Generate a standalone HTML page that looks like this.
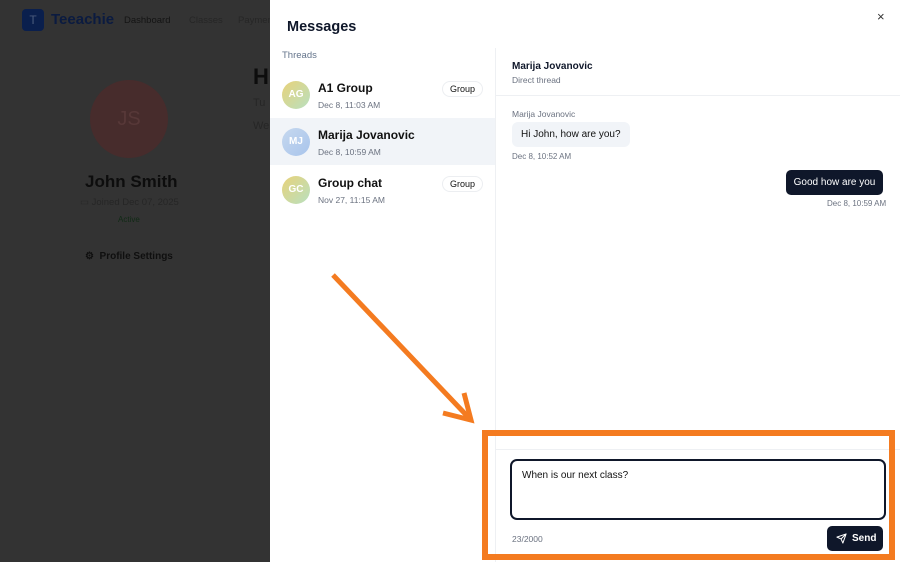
<!DOCTYPE html>
<html><head><meta charset="utf-8"><style>
*{box-sizing:border-box;margin:0;padding:0}
body{width:900px;height:562px;overflow:hidden;position:relative;font-family:"Liberation Sans",sans-serif;background:#333333;color:#0f172a}
.a{position:absolute}
.av{position:absolute;width:28px;height:28px;border-radius:50%;color:#fff;font-size:10px;font-weight:bold;text-align:center;line-height:28px}
.badge{position:absolute;right:12px;font-size:9px;border:1px solid #eceef1;border-radius:10px;padding:2px 7px;color:#111}
.nm{position:absolute;left:48px;font-size:12px;font-weight:bold;color:#111}
.dt{position:absolute;left:48px;font-size:8.5px;color:#6b7280}
</style></head><body>
<div class="a" style="left:22px;top:9px;width:22px;height:22px;border-radius:4px;background:#0a1f4d;color:#4a5a7c;font-size:12px;text-align:center;line-height:22px">T</div>
<div class="a" style="left:51px;top:11px;font-size:15px;font-weight:bold;color:#0b1b40">Teeachie</div>
<div class="a" style="left:124px;top:15px;font-size:9.5px;color:#141414">Dashboard</div>
<div class="a" style="left:189px;top:15px;font-size:9.5px;color:#262626">Classes</div>
<div class="a" style="left:238px;top:15px;font-size:9.5px;color:#262626">Payments</div>
<div class="a" style="left:90px;top:80px;width:78px;height:78px;border-radius:50%;background:#472c2c;color:#573838;font-size:20px;text-align:center;line-height:78px">JS</div>
<div class="a" style="left:85px;top:172px;font-size:17px;font-weight:bold;color:#0d0d0d">John Smith</div>
<div class="a" style="left:80px;top:197px;font-size:9.5px;color:#262626">▭ Joined Dec 07, 2025</div>
<div class="a" style="left:118px;top:215px;font-size:8px;color:#102a15">Active</div>
<div class="a" style="left:85px;top:251px;font-size:10px;color:#0f0f0f;font-weight:bold">⚙ &nbsp;Profile Settings</div>
<div class="a" style="left:253px;top:64px;font-size:22px;font-weight:bold;color:#0d0d0d">H</div>
<div class="a" style="left:253px;top:97px;font-size:11px;color:#262626">Tu</div>
<div class="a" style="left:253px;top:120px;font-size:11px;color:#262626">We</div>
<div class="a" style="left:270px;top:0;width:630px;height:562px;background:#fff"></div>
<div class="a" style="left:287px;top:19px;font-size:14.5px;font-weight:bold">Messages</div>
<div class="a" style="left:877px;top:9px;font-size:13px;color:#333">×</div>
<div class="a" style="left:282px;top:50px;font-size:9.5px;color:#64748b">Threads</div>
<div class="a" style="left:495px;top:48px;width:1px;height:514px;background:#eef0f3"></div>
<div class="a" style="left:270px;top:71px;width:225px;height:47px">
 <div class="av" style="left:12px;top:10px;background:linear-gradient(135deg,#e8d27a,#b8e0c0)">AG</div>
 <div class="nm" style="top:10px">A1 Group</div><div class="dt" style="top:29px">Dec 8, 11:03 AM</div>
 <div class="badge" style="top:10px">Group</div></div>
<div class="a" style="left:270px;top:118px;width:225px;height:47px;background:#f1f4f8">
 <div class="av" style="left:12px;top:10px;background:linear-gradient(135deg,#c6d8ee,#a8c4ec)">MJ</div>
 <div class="nm" style="top:10px">Marija Jovanovic</div><div class="dt" style="top:29px">Dec 8, 10:59 AM</div></div>
<div class="a" style="left:270px;top:166px;width:225px;height:47px">
 <div class="av" style="left:12px;top:10px;background:linear-gradient(135deg,#e8d27a,#b8e0c0)">GC</div>
 <div class="nm" style="top:10px">Group chat</div><div class="dt" style="top:29px">Nov 27, 11:15 AM</div>
 <div class="badge" style="top:10px">Group</div></div>
<div class="a" style="left:512px;top:61px;font-size:10px;font-weight:bold">Marija Jovanovic</div>
<div class="a" style="left:512px;top:75px;font-size:8.5px;color:#6b7280">Direct thread</div>
<div class="a" style="left:496px;top:95px;width:404px;height:1px;background:#eef0f3"></div>
<div class="a" style="left:512px;top:109px;font-size:8.5px;color:#6b7280">Marija Jovanovic</div>
<div class="a" style="left:512px;top:122px;padding:7px 9px;background:#f1f4f8;border-radius:6px;font-size:10px;color:#111">Hi John, how are you?</div>
<div class="a" style="left:512px;top:152px;font-size:8px;color:#6b7280">Dec 8, 10:52 AM</div>
<div class="a" style="left:786px;top:170px;width:97px;height:25px;background:#0f172a;border-radius:5px;color:#fff;font-size:10px;text-align:center;line-height:25px">Good how are you</div>
<div class="a" style="left:827px;top:199px;font-size:8px;color:#6b7280">Dec 8, 10:59 AM</div>
<div class="a" style="left:496px;top:449px;width:404px;height:1px;background:#eef0f3"></div>
<div class="a" style="left:510px;top:459px;width:376px;height:61px;border:2px solid #0f172a;border-radius:7px;padding:9px 10px;font-size:10px;color:#111">When is our next class?</div>
<div class="a" style="left:512px;top:534px;font-size:8.5px;color:#6b7280">23/2000</div>
<div class="a" style="left:827px;top:526px;width:56px;height:25px;background:#0f172a;border-radius:5px;color:#fff;font-size:10px;font-weight:bold;line-height:25px;padding-left:25px">Send
 <svg style="position:absolute;left:9px;top:7px" width="11" height="11" viewBox="0 0 24 24" fill="none" stroke="#fff" stroke-width="2.2" stroke-linejoin="round"><path d="M22 2 11 13M22 2l-7 20-4-9-9-4z"/></svg></div>
<div class="a" style="left:482px;top:430px;width:413px;height:130px;border:6px solid #f47b20"></div>
<svg class="a" style="left:0;top:0" width="900" height="562"><g stroke="#f47b20" stroke-width="5" fill="none"><path d="M333 275 471 420"/><path d="M464 393 471 420 443 413"/></g></svg>
</body></html>
